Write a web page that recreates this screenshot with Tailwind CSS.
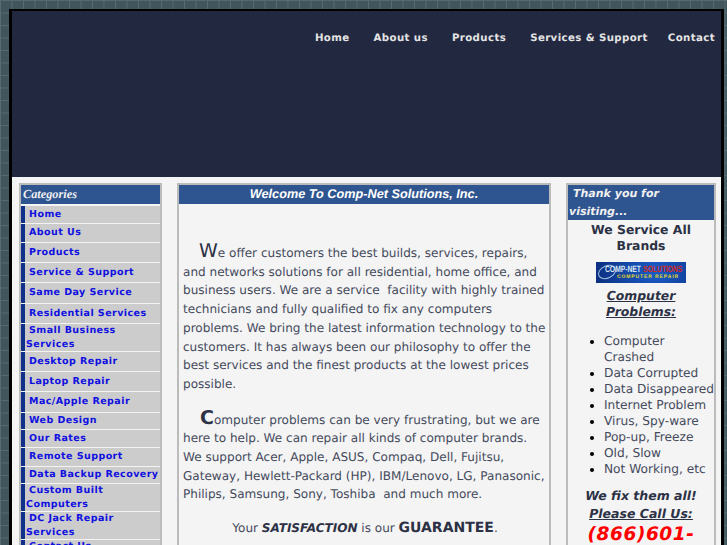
<!DOCTYPE html>
<html lang="en">
<head>
    <meta charset="utf-8"/>
    <title>Comp-Net Solutions, Inc.</title>
    <script src="https://cdn.jsdelivr.net/npm/@tailwindcss/browser@4"></script>
</head>
<body class="h-[545px] overflow-hidden bg-[#41555d] bg-[linear-gradient(to_right,#566a71_1px,transparent_1px),linear-gradient(to_bottom,#566a71_1px,transparent_1px)] bg-size-[11.5px_12.5px] font-['DejaVu_Sans',sans-serif] text-[12.05px] text-[#444a5c] [text-rendering:geometricPrecision]">
<div class="ml-[9px] mt-[9px] w-[715px] border-x-[3px] border-t-[2px] border-black bg-[#f4f4f4]">
    <header class="flex h-[166px] items-start justify-end bg-[#222840] pt-[20px] pr-[6px]">
        <nav class="flex gap-6 text-[10.2px] font-bold tracking-[0.4px] leading-[16px] text-[#e4e4e4]">
            <a href="#">Home</a>
            <a href="#">About us</a>
            <a href="#">Products</a>
            <a href="#">Services &amp; Support</a>
            <a class="-ml-1" href="#">Contact</a>
        </nav>
    </header>
    <main class="flex items-start pt-[6px] pl-[7px]">
        <aside class="w-[143px] shrink-0 border-2 border-[#bbbbbb] bg-[#f4f4f4]">
            <h2 class="h-[19px] bg-[#2f5590] pl-[2px] font-['Liberation_Serif',serif] text-[12.3px] font-bold italic leading-[18px] text-[#f0f0f0]">Categories</h2>
            <ul class="flex flex-col gap-px pt-[2px] text-[9.5px] font-bold tracking-[0.45px] leading-[13.5px] text-[#1010e0]">
                <li class="flex h-[17px] items-center border-l-4 border-[#10308a] bg-[#cccccc] pl-px indent-[3px]">Home</li>
                <li class="flex h-[18px] items-center border-l-4 border-[#10308a] bg-[#cccccc] pl-px indent-[3px]">About Us</li>
                <li class="flex h-[19px] items-center border-l-4 border-[#10308a] bg-[#cccccc] pl-px indent-[3px]">Products</li>
                <li class="flex h-[19px] items-center border-l-4 border-[#10308a] bg-[#cccccc] pl-px indent-[3px]">Service &amp; Support</li>
                <li class="flex h-[20px] items-center border-l-4 border-[#10308a] bg-[#cccccc] pl-px indent-[3px]">Same Day Service</li>
                <li class="flex h-[19px] items-center border-l-4 border-[#10308a] bg-[#cccccc] pl-px indent-[3px]">Residential Services</li>
                <li class="h-[27px] border-l-4 border-[#10308a] bg-[#cccccc] pl-px indent-[3px]">Small Business Services</li>
                <li class="flex h-[19px] items-center border-l-4 border-[#10308a] bg-[#cccccc] pl-px indent-[3px]">Desktop Repair</li>
                <li class="flex h-[19px] items-center border-l-4 border-[#10308a] bg-[#cccccc] pl-px indent-[3px]">Laptop Repair</li>
                <li class="flex h-[20px] items-center border-l-4 border-[#10308a] bg-[#cccccc] pl-px indent-[3px]">Mac/Apple Repair</li>
                <li class="flex h-[16px] items-center border-l-4 border-[#10308a] bg-[#cccccc] pl-px indent-[3px]">Web Design</li>
                <li class="flex h-[17px] items-center border-l-4 border-[#10308a] bg-[#cccccc] pl-px indent-[3px]">Our Rates</li>
                <li class="flex h-[18px] items-center border-l-4 border-[#10308a] bg-[#cccccc] pl-px indent-[3px]">Remote Support</li>
                <li class="flex h-[16px] items-center border-l-4 border-[#10308a] bg-[#cccccc] pl-px indent-[3px]">Data Backup Recovery</li>
                <li class="h-[27px] border-l-4 border-[#10308a] bg-[#cccccc] pl-px indent-[3px]">Custom Built Computers</li>
                <li class="h-[27px] border-l-4 border-[#10308a] bg-[#cccccc] pl-px indent-[3px]">DC Jack Repair Services</li>
                <li class="h-[27px] border-l-4 border-[#10308a] bg-[#cccccc] pl-px indent-[3px]">Contact Us</li>
            </ul>
        </aside>
        <section class="ml-[15px] w-[374px] shrink-0 border-2 border-[#bbbbbb]">
            <h2 class="h-[19px] bg-[#2f5590] text-center font-['Liberation_Sans',sans-serif] text-[12.7px] font-bold italic leading-[18px] text-white">Welcome To Comp-Net Solutions, Inc.</h2>
            <div class="h-[400px] pl-[4px] pr-[2px] pt-[37px] leading-[18.7px]">
                <p class="indent-[16px]"><span class="text-[19px] leading-[20px] text-[#2c3145]">W</span>e offer customers the best builds, services, repairs, and networks solutions for all residential, home office, and business users. We are a service&nbsp; facility with highly trained technicians and fully qualified to fix any computers problems. We bring the latest information technology to the customers. It has always been our philosophy to offer the best services and the finest products at the lowest prices possible.</p>
                <p class="mt-[15px] indent-[17px]"><span class="text-[19px] font-bold leading-[18px] text-[#2c3145]">C</span>omputer problems can be very frustrating, but we are here to help. We can repair all kinds of computer brands. We support Acer, Apple, ASUS, Compaq, Dell, Fujitsu, Gateway, Hewlett-Packard (HP), IBM/Lenovo, LG, Panasonic, Philips, Samsung, Sony, Toshiba&nbsp; and much more.</p>
                <p class="mt-[15px] text-center">Your <b class="italic text-[#2c3145]">SATISFACTION</b> is our <span class="text-[14px] font-bold text-[#2c3145]">GUARANTEE</span>.</p>
            </div>
        </section>
        <aside class="ml-[15px] w-[150px] shrink-0 border-2 border-[#bbbbbb]">
            <h2 class="h-[35px] bg-[#2f5590] pl-px text-[11px] font-bold italic leading-[18px] text-[#f0f0f0]"><span class="pl-[4px]">Thank you for</span> visiting...</h2>
            <div class="h-[400px] pt-[2px] text-center text-[#2c3145]">
                <p class="text-[12.4px] font-bold leading-[16px]">We Service All Brands</p>
                <div class="relative mx-auto mt-[8px] h-[21px] w-[90px] overflow-hidden bg-[radial-gradient(circle_at_65%_40%,#1a5cc8,#0d2f80)]">
                    <svg class="absolute left-0 top-0" width="24" height="21" viewBox="0 0 24 21" fill="none" stroke="#9fc0e0" stroke-width="1"><ellipse cx="11" cy="10" rx="9" ry="6" transform="rotate(-25 11 10)"/></svg>
                    <div class="relative ml-[9px] mt-[3px] w-[98px] origin-left scale-x-[0.75] whitespace-nowrap text-left font-['Liberation_Sans',sans-serif] text-[9px] font-bold leading-[9px] text-[#d8e4f0]">COMP-NET <span class="text-[#d8281c]">SOLUTIONS</span></div>
                    <div class="relative ml-[21px] whitespace-nowrap text-left font-['Liberation_Sans',sans-serif] text-[5px] font-bold leading-[6px] tracking-[0.9px] text-[#e8d820]">COMPUTER REPAIR</div>
                </div>
                <p class="mt-[5px] text-[12.4px] font-bold italic leading-[16px] underline">Computer<br/>Problems:</p>
                <ul class="mt-[13px] list-disc pl-[36px] text-left text-[12.2px] leading-[16px] text-[#444a5c] marker:text-black">
                    <li>Computer Crashed</li>
                    <li>Data Corrupted</li>
                    <li class="whitespace-nowrap">Data Disappeared</li>
                    <li>Internet Problem</li>
                    <li>Virus, Spy-ware</li>
                    <li>Pop-up, Freeze</li>
                    <li>Old, Slow</li>
                    <li>Not Working, etc</li>
                </ul>
                <p class="mt-[10px] text-[12.5px] font-bold italic leading-[18px]">We fix them all!</p>
                <p class="text-[12.5px] font-bold italic leading-[18px] underline">Please Call Us:</p>
                <p class="text-[18.6px] font-bold italic leading-[24px] tracking-[0.5px] text-[#ff0000]">(866)601-</p>
            </div>
        </aside>
    </main>
</div>
</body>
</html>
